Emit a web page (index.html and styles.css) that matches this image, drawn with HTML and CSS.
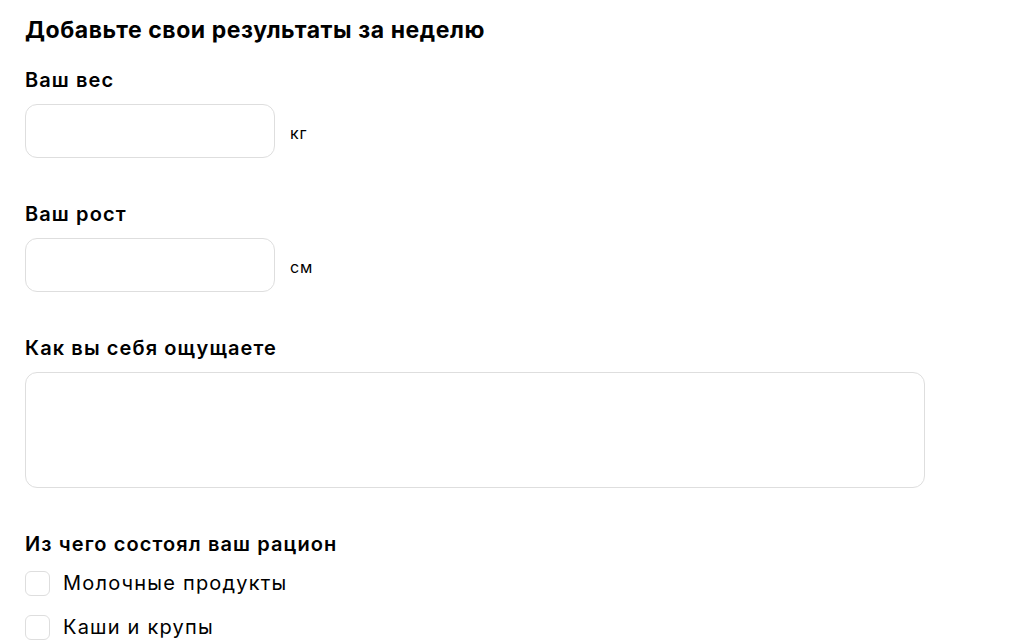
FILE: index.html
```html
<!DOCTYPE html>
<html lang="ru">
  <head>
    <meta charset="UTF-8" />
    <title>Результаты за неделю</title>
    <link rel="stylesheet" href="styles.css">
  </head>
  <body>
    <main class="week-form">
      <h2 class="form-title">Добавьте свои результаты за неделю</h2>

      <div class="field">
        <label class="field-label" for="weight">Ваш вес</label>
        <div class="input-row">
          <input class="text-input" id="weight" type="text" />
          <span class="unit">кг</span>
        </div>
      </div>

      <div class="field">
        <label class="field-label" for="height">Ваш рост</label>
        <div class="input-row">
          <input class="text-input" id="height" type="text" />
          <span class="unit">см</span>
        </div>
      </div>

      <div class="field">
        <label class="field-label" for="feeling">Как вы себя ощущаете</label>
        <textarea class="text-area" id="feeling"></textarea>
      </div>

      <div class="field">
        <div class="field-label">Из чего состоял ваш рацион</div>
        <div class="checks">
          <label class="check-row">
            <span class="check-box"></span>
            Молочные продукты
          </label>
          <label class="check-row">
            <span class="check-box"></span>
            Каши и крупы
          </label>
        </div>
      </div>
    </main>
  </body>
</html>
```

FILE: styles.css
```css
* {
  margin: 0;
  padding: 0;
  box-sizing: border-box;
}

:root {
  --text: #000000;
  --border: #dedede;
}

body {
  background: #ffffff;
  color: var(--text);
  font-family: "Inter", "Noto Sans", sans-serif;
  letter-spacing: 0.05em;
}

.week-form {
  padding: 16px 25px;
}

.form-title {
  font-size: 23px;
  line-height: 28px;
  font-weight: 700;
  letter-spacing: 0.025em;
}

.field {
  margin-top: 24px;
}

.field + .field {
  margin-top: 44px;
}

.field-label {
  display: block;
  font-size: 20px;
  line-height: 24px;
  font-weight: 600;
  letter-spacing: 0.055em;
  margin-bottom: 12px;
}

.input-row {
  display: flex;
  align-items: center;
  gap: 15px;
}

.text-input {
  width: 250px;
  height: 54px;
  border: 1px solid var(--border);
  border-radius: 12px;
  outline: none;
}

.unit {
  font-size: 16px;
  padding-top: 4px;
}

.text-area {
  display: block;
  width: 900px;
  height: 116px;
  margin-top: 1px;
  border: 1px solid var(--border);
  border-radius: 12px;
  resize: none;
  outline: none;
}

.checks {
  display: flex;
  flex-direction: column;
  gap: 19px;
  margin-top: 15px;
}

.check-row {
  display: flex;
  align-items: center;
  gap: 13px;
  font-size: 20px;
  line-height: 25px;
  letter-spacing: 0.06em;
}

.check-box {
  width: 25px;
  height: 25px;
  border: 1px solid var(--border);
  border-radius: 6px;
}
```
